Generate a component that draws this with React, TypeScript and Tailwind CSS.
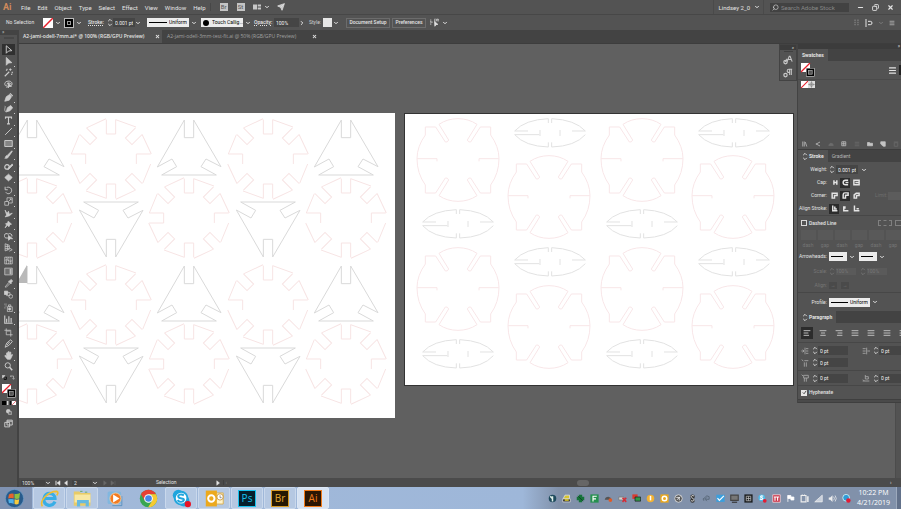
import React from "react";
import { ChevronDown, ChevronRight, Menu, Search, Send, Minus, X, Copy, AlignLeft, AlignCenter, AlignRight, AlignJustify } from "lucide-react";

type Kids = { children?: React.ReactNode };

/* ---------- shared bits ---------- */

function Glyph({ children, size = "size-[9px]" }: Kids & { size?: string }) {
  return (
    <svg viewBox="0 0 24 24" className={`${size} shrink-0`} fill="none" stroke="currentColor" strokeWidth="2" aria-hidden="true">
      {children}
    </svg>
  );
}

function Chev() {
  return <ChevronDown className="size-[6px] shrink-0" strokeWidth={4} aria-hidden="true" />;
}

function Stepper() {
  return (
    <svg viewBox="0 0 6 10" className="h-[9px] w-[6px] shrink-0" fill="none" stroke="currentColor" aria-hidden="true">
      <path d="M1 3.5 3 1.5l2 2M1 6.5l2 2 2-2" />
    </svg>
  );
}

function NoneSwatch({ className }: { className: string }) {
  return (
    <svg viewBox="0 0 10 10" className={className} aria-hidden="true">
      <rect width="10" height="10" fill="#fff" />
      <path d="M0 10 10 0" stroke="#e8202c" strokeWidth="1.5" />
    </svg>
  );
}

function Field({ label, value, className = "w-[22px]" }: { label: string; value: string; className?: string }) {
  return <input aria-label={label} defaultValue={value} className={`${className} h-[9px] shrink-0 bg-[#454545] px-[2px] text-[#f2f2f2] outline-none`} />;
}

function LineSelect({ label, text, className }: { label: string; text?: string; className: string }) {
  return (
    <span className="flex shrink-0 items-center gap-[2px]">
      <span className={`${className} flex h-[9px] items-center gap-[2px] bg-[#ececec] px-[2px] text-black`}>
        <span className="h-px min-w-[6px] flex-1 bg-black" />
        <select aria-label={label} className={`${text ? "w-[18px]" : "w-0"} appearance-none bg-transparent outline-none`}>
          <option>{text ?? ""}</option>
        </select>
      </span>
      <Chev />
    </span>
  );
}

function FillStroke() {
  return (
    <svg viewBox="0 0 14 14" className="size-[14px] shrink-0" aria-hidden="true">
      <rect x="0" y="0" width="9" height="9" fill="#fff" />
      <path d="M0 9 9 0" stroke="#e8202c" strokeWidth="1.3" />
      <rect x="5" y="5" width="8.5" height="8.5" fill="#ddd" />
      <rect x="5.5" y="5.5" width="7.5" height="7.5" fill="#000" />
      <rect x="7.3" y="7.3" width="3.9" height="3.9" fill="#535353" stroke="#bbb" strokeWidth=".6" />
    </svg>
  );
}

/* ---------- top bars ---------- */

const menus = ["File", "Edit", "Object", "Type", "Select", "Effect", "View", "Window", "Help"];

function MenuBar() {
  return (
    <header className="flex h-[15px] shrink-0 items-center border-b border-[#474747] text-[6px]">
      <span className="w-[18px] pl-[3px] text-[9px] font-bold leading-none text-[#d08a5c]">Ai</span>
      <nav className="flex items-center gap-[7px] pl-[3px]">
        {menus.map((m) => (
          <button key={m}>{m}</button>
        ))}
      </nav>
      <div className="ml-[4px] flex items-center gap-[9px] border-l border-[#474747] pl-[9px]">
        {["Br", "St"].map((t) => (
          <button key={t} className="flex size-[8px] items-center justify-center bg-[#c4c4c4] text-[6px] leading-none text-[#535353]">{t}</button>
        ))}
        <button aria-label="Arrange documents" className="-ml-px flex items-center gap-[3px]">
          <svg viewBox="0 0 8 5" className="h-[6px] w-[8px]" fill="#c8c8c8"><path d="M0 0h4v5H0zM4.700 0H8v2.100H4.700zM4.700 2.900H8V5H4.700z" /></svg>
          <Chev />
        </button>
        <button aria-label="GPU performance" className="-ml-[2px]"><Send className="size-[8px] fill-[#c8c8c8]" /></button>
      </div>
      <div className="ml-auto flex h-full items-center">
        <button className="flex h-full items-center gap-[4px] border-x border-[#4a4a4a] pl-[5px] pr-[3px]">Lindsey 2_0 <Chev /></button>
        <label className="ml-[6px] flex h-[9px] w-[79px] items-center gap-[2px] bg-[#424242] px-[2px]">
          <Search className="size-[7px] -scale-x-100" aria-hidden="true" />
          <input aria-label="Search Adobe Stock" placeholder="Search Adobe Stock" className="w-[66px] bg-transparent outline-none placeholder:text-[#888888]" />
        </label>
        <div className="flex items-center gap-[8px] pl-[8px] pr-[7px]">
          <button aria-label="Minimize"><Minus className="size-[7px]" strokeWidth={4} /></button>
          <button aria-label="Restore"><Copy className="size-[7px] -scale-x-100" strokeWidth={3} /></button>
          <button aria-label="Close"><X className="size-[7px]" strokeWidth={4} /></button>
        </div>
      </div>
    </header>
  );
}

function ControlBar() {
  return (
    <div className="flex h-[15px] shrink-0 items-center whitespace-nowrap">
      <span className="w-[43px] pl-[6px]">No Selection</span>
      <button aria-label="Fill" className="flex w-[21px] items-center gap-[2px]"><NoneSwatch className="size-[10px]" /><Chev /></button>
      <button aria-label="Stroke color" className="flex w-[24px] items-center gap-[2px]">
        <span className="flex size-[10px] items-center justify-center border border-[#bbbbbb] bg-black"><span className="size-[4px] border border-[#999999]" /></span>
        <Chev />
      </button>
      <span className="w-[19px] font-medium underline decoration-dotted">Stroke:</span>
      <Stepper />
      <Field label="Stroke weight" value="0.001 pt" />
      <Chev />
      <span className="w-[6px]" />
      <LineSelect label="Width profile" text="Uniform" className="w-[42px]" />
      <label className="ml-[4px] flex h-[9px] w-[42px] items-center gap-[3px] bg-[#ececec] pl-[2px] text-black">
        <span className="size-[6px] shrink-0 rounded-full bg-black" />
        <select aria-label="Brush" className="w-[31px] appearance-none bg-transparent outline-none"><option>Touch Callig...</option></select>
      </label>
      <span className="w-[2px]" />
      <Chev />
      <span className="ml-[3px] w-[20px] font-medium underline decoration-dotted">Opacity:</span>
      <Field label="Opacity" value="100%" className="w-[25px]" />
      <ChevronRight className="size-[6px]" strokeWidth={4} aria-hidden="true" />
      <span className="ml-[4px] w-[14px] text-[#d0d0d0]">Style:</span>
      <button aria-label="Graphic style" className="flex w-[23px] items-center gap-[1px]"><span className="size-[9px] bg-[#e6e6e6]" /><Chev /></button>
      <button className="h-[10px] w-[44px] border border-[#6c6c6c] font-medium leading-none">Document Setup</button>
      <button className="ml-[2px] h-[10px] w-[34px] border border-[#6c6c6c] font-medium leading-none">Preferences</button>
      <button aria-label="Select similar" className="ml-[4px] flex items-center gap-[3px]">
        <Glyph><path d="M2 4v14M2 11h6M12 3h5v5h-5zM19 3h4v5h-4z" strokeDasharray="3 1" /><path d="m12 9 9 8-5 .5L13 22z" fill="currentColor" /></Glyph>
        <Chev />
      </button>
      <div className="ml-auto flex items-center gap-[5px] pr-[6px]">
        <span className="text-[#7b7b7b]"><Glyph size="size-[7px]"><path d="M7 2v20M17 2v20" strokeWidth="5" strokeDasharray="5 2" /></Glyph></span>
        <Glyph size="size-[8px]"><path d="M3 1v22" strokeWidth="4" strokeDasharray="4 2" /><path d="M9 7h7a5 5 0 0 1 0 10H9" strokeWidth="3" /></Glyph>
        <span className="text-[#7b7b7b]"><Chev /></span>
        <Menu className="size-[6px] text-[#bbbbbb]" strokeWidth={3} aria-hidden="true" />
      </div>
    </div>
  );
}

/* ---------- tools ---------- */

const solid = { fill: "currentColor" };
const tools: { name: string; art: React.ReactNode }[][] = [
  [
    { name: "Selection", art: <path d="m6 2 15 13-9 1-6 6z" strokeWidth="2.500" /> },
    { name: "Direct Selection", art: <path d="m6 1 15 14-9 1-6 6z" {...solid} /> },
    { name: "Magic Wand", art: <path d="M2 22 14 10M17 1v6M14 4h6M22 10v4M8 2v4M5 6h3M19 17h3" strokeWidth="3" /> },
    { name: "Lasso", art: <><path d="M5 16C0 12 1 4 11 3s14 8 7 13M5 16c3-2 5 1 2 5M7 11c4-4 9-4 13 0" strokeWidth="2.500" /><path d="m11 7 9 10-5 0-4 4z" {...solid} /></> },
  ],
  [
    { name: "Pen", art: <><path d="M2 22 6 10l9-6 5 6-6 9z" {...solid} /><path d="m16 1 7 7" strokeWidth="3" /></> },
    { name: "Curvature", art: <><path d="m6 21 3-11 9-6 5 6-7 8z" {...solid} /><path d="M2 5c4 3-4 9 3 17" /></> },
    { name: "Type", art: <path d="M4 7V3h16v4M12 3v18M8 21h8" strokeWidth="3" /> },
    { name: "Line Segment", art: <path d="M3 21 21 3" strokeWidth="2.500" /> },
    { name: "Rectangle", art: <path d="M2 4h20v16H2z" fill="#858585" strokeWidth="2.500" /> },
    { name: "Paintbrush", art: <path d="M2 22c3-1 1-7 6-7L21 2l1 2L12 18c-2 5-6 4-10 4z" {...solid} /> },
    { name: "Shaper", art: <><circle cx="8" cy="13" r="6" strokeWidth="3" /><path d="m10 20 3-6L22 5l2 3-9 9z" {...solid} /></> },
    { name: "Eraser", art: <path d="m2 12 10-9 10 9-10 9zM7 8l10 9" {...solid} /> },
  ],
  [
    { name: "Rotate", art: <path d="M7 4c8-3 15 3 13 10s-11 9-15 3M3 2v8h7" strokeWidth="2.500" /> },
    { name: "Scale", art: <path d="M2 12h10v10H2zM8 12V2h14v14H12M13 11l6-6M15 5h4v4" /> },
    { name: "Width", art: <path d="m3 3 5 9 4-6 2 8 8-3-7 7-12 3 4-5z" {...solid} /> },
    { name: "Puppet Warp", art: <path d="m11 3 9 8-4 1-3 6-4-4-6 7 4-8-3-3 6-2z" {...solid} /> },
    { name: "Shape Builder", art: <><path d="M13 16H8a6 6 0 1 1 3-10 6 6 0 0 1 10 6" strokeWidth="2.500" /><path d="m12 9 11 9-6 0-5 4z" {...solid} /></> },
    { name: "Perspective Grid", art: <path d="M3 2v19M3 2l11 4v11L3 21M3 9l11 0M3 15h11M9 4v15M14 13l8 5-8 4" /> },
  ],
  [
    { name: "Mesh", art: <><path d="M2 3h20v18H2z" /><path d="M2 12c7-6 13 6 20 0M12 3c-5 7 5 11 0 18M7 3c3 6-3 12 0 18M17 3c-3 6 3 12 0 18" /></> },
    { name: "Gradient", art: <><path d="M2 3h20v18H2z" fill="#707070" /><path d="M15 5h5v14h-5z" fill="#bbb" stroke="none" /></> },
    { name: "Eyedropper", art: <><path d="M3 21 13 9l3 3L6 22z" /><path d="m12 6 3-1 4-4 4 4-4 5v3z" {...solid} /></> },
    { name: "Blend", art: <><path d="M1 3h9v9H1z" {...solid} /><path d="M7 7h9v8H7z" /><circle cx="18" cy="17" r="5" /></> },
  ],
  [
    { name: "Symbol Sprayer", art: <><path d="M9 10h13v13H9zM12 5h6v4h-6z" /><circle cx="15" cy="16" r="3" {...solid} /><path d="M1 3h7M2 8h5M1 13h4" strokeDasharray="2 1" /></> },
    { name: "Column Graph", art: <path d="M2 1v21h21M7 10v10M13 3v17M19 8v12" strokeWidth="3" /> },
  ],
  [
    { name: "Artboard", art: <path d="M6 1v17h17M1 6h17v17M8 8h8" /> },
    { name: "Slice", art: <path d="m3 22 4-11L18 2l4 5-9 10z M8 16l7-8" strokeWidth="2.500" /> },
    { name: "Hand", art: <path d="M7 14V5q2-2 3 0l1 5V2q2-1 3 0v8l2-7q2-1 2 1v8l3-3q3 0 1 3l-5 10H9L2 13q1-3 4 0z" {...solid} /> },
    { name: "Zoom", art: <><circle cx="10" cy="9" r="7" strokeWidth="2.500" /><path d="m15 14 7 8" strokeWidth="4" /></> },
  ],
];

const groupHeights = ["h-[46px]", "h-[91px]", "h-[68px]", "h-[45px]", "h-[23px]", "h-[45px]"];

function ToolBox() {
  return (
    <aside className="flex w-[19px] shrink-0 flex-col items-center border-r-2 border-[#434343] text-[#cccccc]">
      <span className="h-[5px] w-full bg-[#434343] pl-[2px] text-[5px] leading-[4px]">»</span>
      <span className="mt-[2px] h-[2px] w-[10px] bg-[#474747]" />
      <div className="mt-[5px] flex flex-col gap-[2px]">
        {tools.map((group, g) => (
          <div key={g} className={`flex flex-col justify-between ${groupHeights[g]}`}>
            {group.map((t) => (
              <button
                key={t.name}
                aria-label={t.name}
                className={`relative flex h-[11px] w-[13px] items-center justify-center ${t.name === "Selection" ? "bg-[#303030]" : ""}`}
              >
                <Glyph>{t.art}</Glyph>
                {!["Selection", "Magic Wand", "Lasso", "Mesh", "Gradient", "Blend", "Artboard", "Zoom"].includes(t.name) && (
                  <span className="absolute bottom-0 right-0 size-px bg-[#cccccc]" />
                )}
              </button>
            ))}
          </div>
        ))}
      </div>
      <div className="mt-[3px] flex w-full items-center justify-between px-[2px]">
        <Glyph size="size-[5px]"><path d="M1 1h13v13H1z" {...solid} /><path d="M10 10h11v11H10z" stroke="#000" strokeWidth="4" /></Glyph>
        <Glyph size="size-[5px]"><path d="M3 5h14v14M6 1 2 5l4 5M12 16l5 5 5-5" strokeWidth="3" /></Glyph>
      </div>
      <div className="mt-[4px]"><FillStroke /></div>
      <div className="mt-[3px] flex">
        <span className="size-[4px] border border-black bg-black" />
        <span className="ml-px size-[4px] bg-linear-to-r from-white to-black" />
        <NoneSwatch className="ml-px size-[4px]" />
      </div>
      <button aria-label="Drawing mode" className="mt-[4px]"><Glyph size="size-[6px]"><circle cx="9" cy="9" r="8" {...solid} /><path d="M10 10h12v12H10z" fill="#777" /></Glyph></button>
      <button aria-label="Screen mode" className="mt-[4px]"><Glyph><path d="M8 3h14v13H8zM2 9h13v12H2zM8 6h14" strokeWidth="2.500" /></Glyph></button>
    </aside>
  );
}

/* ---------- artwork ---------- */

function Gear({ x, y, closed = false }: { x: number; y: number; closed?: boolean }) {
  const wedge = "M14 -118 L75 -96 M14 -118 V-75 H-14 V-118";
  return (
    <g transform={`translate(${x} ${y}) scale(.3333)`} stroke="#f7e4e4" strokeWidth="3" fill="none">
      {[0, 1, 3, 4, 5, 7].map((k) => (
        <path key={k} d={wedge} transform={`rotate(${k * 45})`} />
      ))}
      <path d="M119 -15H76V15M119 15 95 73M-119 -15H-76V15M-119 -15-95 -73" />
      {closed && <path d="M-76 15h-43" />}
    </g>
  );
}

function Triangle({ x, y, flip = false }: { x: number; y: number; flip?: boolean }) {
  return (
    <g transform={`translate(${x} ${y}) scale(.3333 ${flip ? "-.3333" : ".3333"})`} stroke="#d9d9d9" strokeWidth="3" fill="none">
      <path d="M14 0 96 140 51 117 36 140 82 165H-82L-37 140-51 117-95 141-14 0V53H14Z" />
    </g>
  );
}

function Rosette({ x, y }: { x: number; y: number }) {
  const half = "M0-124Q-32-124-57-107L-28-60Q-31-52-38-54L-67-99H-98V-75Q-123-40-123-4H-63V4";
  return (
    <g transform={`translate(${x} ${y}) scale(.3333)`} stroke="#f8e6e8" strokeWidth="3" fill="none">
      <path d={half} />
      <path d={half} transform="scale(-1 1)" />
      <path d="M0 124Q-32 124-57 107L-28 60Q-31 52-38 54L-67 99H-98V75Q-123 40-123-4" />
      <path d="M0 124Q32 124 57 107L28 60Q31 52 38 54L67 99H98V75Q123 40 123-4" />
    </g>
  );
}

function Leaf({ x, y }: { x: number; y: number }) {
  const side = "M-5-30V-43Q-75-40-106-6H-66M-30-9V9M-106 5Q-75 40-5 42V28";
  return (
    <g transform={`translate(${x} ${y}) scale(.3333)`} stroke="#e2e2e2" strokeWidth="3" fill="none">
      <path d={side} />
      <path d={side} transform="scale(-1 1)" />
      <path d="M-106 5H-32" />
    </g>
  );
}

const rows = [0, 146];
const rosettes = [[458, 160], [642, 160], [549, 197], [733, 197], [458, 289], [642, 289], [549, 327], [733, 327]];
const leaves = [[550, 133], [734, 133], [458, 224], [642, 224], [550, 262], [734, 262], [458, 354], [642, 354]];

function Canvas() {
  return (
    <main className="flex min-w-0 flex-1 items-start gap-[9px] overflow-hidden bg-[#606060] pt-[69px]">
      <svg viewBox="19 113 376 305" className="h-[305px] w-[376px] shrink-0 bg-white" role="img" aria-label="Artboard 1">
        {rows.map((dy) => (
          <g key={dy} transform={`translate(0 ${dy})`}>
            <Gear x={111} y={159} />
            <Gear x={268} y={159} />
            <Gear x={32} y={218} />
            <Gear x={189} y={218} closed />
            <Gear x={346} y={218} />
            <Triangle x={32} y={120} />
            <Triangle x={189} y={120} />
            <Triangle x={346} y={120} />
            <Triangle x={111} y={257} flip />
            <Triangle x={268} y={257} flip />
          </g>
        ))}
        <path d="M19 283v-4l8-14v18z" fill="#b9b9b9" />
      </svg>
      <svg viewBox="405 114 388 271" className="box-content h-[271px] w-[388px] shrink-0 border border-[#333333] bg-white" role="img" aria-label="Artboard 2">
        {rosettes.map(([x, y]) => <Rosette key={`${x}-${y}`} x={x} y={y} />)}
        {leaves.map(([x, y]) => <Leaf key={`${x}-${y}`} x={x} y={y} />)}
      </svg>
    </main>
  );
}

/* ---------- panels ---------- */

function PanelTabs({ tabs }: { tabs: string[] }) {
  return (
    <div role="tablist" className="flex h-[12px] bg-[#434343]">
      {tabs.map((t, i) => (
        <button key={t} role="tab" aria-selected={i === 0} className={`flex items-center gap-px px-[4px] ${i === 0 ? "bg-[#535353] font-bold" : "text-[#b5b5b5]"}`}>
          {i === 0 && t !== "Swatches" && <Stepper />}
          {t}
        </button>
      ))}
    </div>
  );
}

function Row({ label, children, dim = false, h = "h-[13px]" }: Kids & { label: string; dim?: boolean; h?: string }) {
  return (
    <div className={`flex ${h} items-center ${dim ? "text-[#777777]" : ""}`}>
      <span className="w-[29px] shrink-0 whitespace-nowrap text-right">{label}</span>
      <div className="flex items-center gap-[1px] pl-[2px]">{children}</div>
    </div>
  );
}

function Trio({ names, on, art }: { names: string[]; on: number; art: string[] }) {
  return (
    <>
      {names.map((n, i) => (
        <button key={n} aria-label={n} className={`flex size-[10px] items-center justify-center ${i === on ? "bg-[#2c2c2c]" : ""}`}>
          <Glyph size="size-[7px]"><path d={art[i]} strokeWidth="5" /></Glyph>
        </button>
      ))}
    </>
  );
}

function Indent({ label, art }: { label: string; art: string }) {
  return (
    <span className="flex w-[61px] shrink-0 items-center pl-[3px]">
      <span className="text-[#aaaaaa]"><Glyph size="size-[8px]"><path d={art} strokeWidth="2.500" /></Glyph></span>
      <span className="w-[3px]" />
      <Stepper />
      <Field label={label} value="0 pt" className="w-[30px]" />
    </span>
  );
}

const alignIcons = [AlignLeft, AlignCenter, AlignRight, AlignJustify, AlignJustify, AlignJustify, AlignJustify];

function Dock() {
  return (
    <aside className="flex w-[104px] shrink-0 flex-col overflow-hidden">
      <div className="border-l border-[#434343] bg-[#535353]">
        <div className="h-[5px] bg-[#3c3c3c] pr-px text-right leading-[4px]">»</div>
        <PanelTabs tabs={["Swatches"]} />
        <div className="flex h-[19px] items-center justify-between border-b border-[#4a4a4a] pl-[3px]">
          <FillStroke />
          <span className="flex items-center gap-[2px]"><Menu className="size-[9px]" strokeWidth={3} aria-hidden="true" /><span className="h-[10px] w-[2px] bg-[#222222]" /></span>
        </div>
        <div className="flex h-[58px] items-start pl-[3px] pt-px">
          <NoneSwatch className="size-[7px]" />
          <Glyph size="size-[7px]"><path d="M0 0h24v24H0z" fill="#ddd" stroke="none" /><path d="M12 1v22M1 12h22" stroke="#777" /><circle cx="12" cy="12" r="6" stroke="#777" /></Glyph>
        </div>
        <div className="flex h-[11px] items-center gap-[7px] pl-[4px] text-[#c4c4c4]">
          {[
            ["Libraries", "M3 2v20M9 2v20M13 4l6 18"],
            ["Share", "M20 4 5 12l15 8M3 12h4"],
            ["Cloud", "M3 18q0-6 5-6 2-6 7-2 6 0 6 8z"],
            ["Show kinds", "M3 3h16v16H3zM3 11h16M11 3v16"],
            ["Options", "M3 5h18M3 12h18M3 19h18"],
            ["New group", "M2 6h8l2 3h10v10H2z"],
            ["New swatch", "M3 3h18v18h-8l-10-9z"],
            ["Delete", "M5 7h14v14H5zM3 4h18"],
          ].map(([n, d], i) => (
            <button key={n} aria-label={n} className={[2, 4, 7].includes(i) ? "text-[#6c6c6c]" : ""}>
              <Glyph size="size-[6px]"><path d={d} strokeWidth="3" fill={i === 5 || i === 6 || i === 2 ? "currentColor" : "none"} /></Glyph>
            </button>
          ))}
        </div>
        <div className="border-t border-[#3c3c3c]"><PanelTabs tabs={["Stroke", "Gradient"]} /></div>
        <div className="pt-px">
          <Row label="Weight:"><Stepper /><Field label="Weight" value="0.001 pt" /><span className="w-px" /><Chev /></Row>
          <Row label="Cap:"><Trio names={["Butt cap", "Round cap", "Projecting cap"]} on={1} art={["M10 4v16M20 4v16M10 12h12", "M21 4h-9a8 8 0 0 0 0 16h9M12 12h10", "M3 4h18v16H3zM8 12h13"]} /></Row>
          <Row label="Corner:">
            <Trio names={["Miter", "Round", "Bevel"]} on={1} art={["M4 21V4h17v8H12v9z", "M4 21V9q0-6 6-6h11v8H12v10z", "M4 21V10l7-6h10v8H12v9z"]} />
            <span className="w-[12px]" /><span className="text-[#6e6e6e]">Limit:</span><span className="h-[8px] w-[14px] bg-[#5c5c5c]" />
          </Row>
          <Row label="Align Stroke:"><Trio names={["Center", "Inside", "Outside"]} on={0} art={["M6 2v18h16M13 5v9h7", "M6 4v16h16M10 4v9", "M5 2v18h17M12 13h8"]} /></Row>
        </div>
        <div className="flex h-[15px] items-center justify-between border-t border-[#474747] pl-[3px]">
          <label className="flex items-center gap-[2px] font-medium">
            <input type="checkbox" className="size-[6px] appearance-none border border-[#d8d8d8]" />Dashed Line
          </label>
          <span className="flex gap-[3px]"><span className="h-[6px] w-[14px] border border-dashed border-[#808080]" /><span className="h-[6px] w-[6px] border border-r-0 border-dashed border-[#808080]" /></span>
        </div>
        <div className="flex h-[19px] items-start gap-[1px] pl-[2px] text-[#757575]">
          {["dash", "gap", "dash", "gap", "dash", "gap"].map((t, i) => (
            <label key={i} className="flex w-[16px] shrink-0 flex-col items-center gap-[2px]">
              <input disabled aria-label={`${t} ${i + 1}`} className="h-[10px] w-[15px] bg-[#595959]" />{t}
            </label>
          ))}
        </div>
        <Row label="Arrowheads:" h="h-[15px]"><LineSelect label="Start arrowhead" className="w-[18px]" /><span className="w-[2px]" /><LineSelect label="End arrowhead" className="w-[18px]" /></Row>
        <Row label="Scale:" dim h="h-[14px]"><Stepper /><span className="w-[20px] bg-[#5a5a5a]">100%</span><span className="w-[2px]" /><Stepper /><span className="w-[20px] bg-[#5a5a5a]">100%</span></Row>
        <Row label="Align:" dim h="h-[14px]"><span className="w-[8px] bg-[#4a4a4a] text-center">→</span><span className="w-[2px]" /><span className="w-[8px] bg-[#4a4a4a] text-center">→</span></Row>
        <div className="border-t border-[#474747]"><Row label="Profile:" h="h-[18px]"><LineSelect label="Profile" text="Uniform" className="w-[41px]" /></Row></div>
        <PanelTabs tabs={["Paragraph"]} />
        <div className="flex h-[19px] items-center gap-[4px] pl-[3px]">
          {alignIcons.map((Icon, i) => (
            <button key={i} aria-label={`Paragraph alignment ${i + 1}`} className={`flex size-[12px] shrink-0 items-center justify-center ${i === 0 ? "bg-[#2c2c2c]" : ""}`}>
              <Icon className="size-[8px] text-[#bbbbbb]" strokeWidth={3} />
            </button>
          ))}
        </div>
        <div className="flex flex-col gap-[3px] border-t border-[#474747] py-[3px]">
          <div className="flex"><Indent label="Left indent" art="M1 12h8M5 8l4 4-4 4M12 2v20M15 5h7M15 12h7M15 19h7" /><Indent label="Right indent" art="M2 5h9M2 12h9M2 19h9M14 2v20M24 12h-8" /></div>
          <div className="flex"><Indent label="First-line indent" art="M2 2l5 4M10 5h12M10 10v13M16 10v13" /></div>
        </div>
        <div className="flex h-[15px] items-center border-t border-[#474747]"><Indent label="Space before" art="M2 2l4 4M8 4h14v8H8zM10 12v11M16 12v11" /><Indent label="Space after" art="M2 21h20M10 3v12h9V8h-9M3 17l4 4" /></div>
        <div className="flex h-[14px] items-center border-t border-[#474747] pl-[3px]">
          <label className="flex items-center gap-[2px] font-medium">
            <span className="grid place-items-center">
              <input type="checkbox" defaultChecked className="col-start-1 row-start-1 size-[6px] appearance-none bg-[#e6e6e6]" />
              <svg viewBox="0 0 6 6" className="pointer-events-none col-start-1 row-start-1 size-[5px]" fill="none" stroke="#333"><path d="m1 3 1.500 1.500L5 1" /></svg>
            </span>
            Hyphenate
          </label>
        </div>
        <div className="h-[4px] border-y border-[#3f3f3f] bg-[#4a4a4a]" />
      </div>
      <div className="flex flex-1 bg-[#606060]"><span className="ml-auto w-[6px] border-l border-[#4c4c4c] bg-[#535353]" /></div>
    </aside>
  );
}

function IconStrip() {
  return (
    <div className="absolute right-[104px] top-0 flex h-[37px] w-[18px] flex-col items-center border border-[#434343] bg-[#535353] text-[#c8c8c8]">
      <span className="h-[5px] w-full bg-[#3c3c3c] pr-[2px] text-right leading-[4px]">«</span>
      <span className="mt-[1px] h-px w-[9px] bg-[#404040]" />
      <button aria-label="Character styles" className="mt-[3px]"><Glyph size="size-[10px]"><circle cx="6" cy="17" r="4" strokeWidth="3" /><path d="m10 16 5-13h2l5 13M12 11h9M5 17l5-8" strokeWidth="2.500" /></Glyph></button>
      <button aria-label="Paragraph styles" className="mt-[3px]"><Glyph size="size-[10px]"><circle cx="6" cy="17" r="4" strokeWidth="3" /><path d="M20 3v14M16 3v14M22 3h-8q-4 0-4 4t6 4" strokeWidth="2.500" /></Glyph></button>
    </div>
  );
}

/* ---------- status and taskbar ---------- */

function StatusBar() {
  return (
    <footer className="flex h-[9px] shrink-0 items-center bg-[#4b4b4b] leading-none">
      <input aria-label="Zoom level" defaultValue="100%" className="ml-[2px] w-[24px] bg-[#434343] px-px outline-none" />
      <Chev />
      <button aria-label="First artboard" className="ml-[4px]"><Glyph size="size-[6px]"><path d="M4 3v18" strokeWidth="4" /><path d="M20 3v18L8 12z" {...solid} /></Glyph></button>
      <button aria-label="Previous artboard" className="ml-[2px]"><Glyph size="size-[6px]"><path d="M17 3v18L6 12z" {...solid} /></Glyph></button>
      <input aria-label="Artboard" defaultValue="2" className="ml-[3px] w-[20px] bg-[#434343] px-[2px] outline-none" />
      <Chev />
      <span className="ml-[4px] flex gap-[2px] text-[#686868]">
        <Glyph size="size-[6px]"><path d="M7 3v18l11-9z" {...solid} /></Glyph>
        <Glyph size="size-[6px]"><path d="M4 3v18l12-9zM20 3v18" {...solid} /></Glyph>
      </span>
      <span className="ml-[40px]">Selection</span>
      <span className="ml-[38px]"><Glyph size="size-[6px]"><path d="M7 3v18l11-9z" {...solid} /></Glyph></span>
      <span className="ml-[2px] border-l border-[#404040] px-[2px] text-[#888888]">‹</span>
      <span className="flex flex-1 justify-center"><span className="ml-[46px] h-[6px] w-[12px] rounded-full bg-[#666666]" /></span>
      <span className="w-[11px]">›</span>
    </footer>
  );
}

function AdobeTile({ text, frame }: { text: string; frame: string }) {
  return <span className={`${frame} flex h-[17px] w-[18px] items-center justify-center border text-[10px] font-medium leading-none`}>{text}</span>;
}

const big = "size-[19px]";
const apps: { name: string; on: boolean; art: React.ReactNode }[] = [
  { name: "Internet Explorer", on: true, art: <svg viewBox="0 0 24 24" className={big} fill="none"><path d="M19 16c-4 8-15 5-14-4S19 4 19 12H6" stroke="#38aee6" strokeWidth="4" /><path d="M3 22C-1 15 10 3 21 3c3 1 1 4 0 5" stroke="#edbd32" strokeWidth="2" /></svg> },
  { name: "Explorer", on: true, art: <svg viewBox="0 0 24 24" className={big}><path d="M1 3h7l2 2h12v16H1z" fill="#e8cb68" /><path d="M2 7h20v10H2z" fill="#f8e8a4" /><path d="M5 14h15v8h-4v-4H9v4H5z" fill="#66b9df" /><path d="M9 3h3M15 4h3" stroke="#5aa34d" /></svg> },
  { name: "Media Player", on: false, art: <svg viewBox="0 0 24 24" className={big}><rect x="2" y="3" width="17" height="16" rx="2" fill="#81b7df" /><path d="M8 21h12V9" fill="none" stroke="#4c8dbd" /><circle cx="12" cy="12" r="7" fill="#f37b20" stroke="#f9d5a8" /><path d="M9 7v10l8-5z" fill="#fff" /></svg> },
  { name: "Chrome", on: false, art: <svg viewBox="0 0 24 24" className={big}><circle cx="12" cy="12" r="11" fill="#39a651" /><path d="M2.500 6.500A11 11 0 0 1 21.500 6.500H12L7.300 14.700z" fill="#e64033" /><path d="M21.500 6.500A11 11 0 0 1 11.500 23L16.700 14.700 12 6.500z" fill="#f5ca32" /><circle cx="12" cy="12" r="5.500" fill="#fff" /><circle cx="12" cy="12" r="4.200" fill="#4587e9" /></svg> },
  { name: "Skype", on: true, art: <svg viewBox="0 0 24 24" className={big}><circle cx="8" cy="8" r="7" fill="#20a5dd" /><circle cx="15" cy="15" r="7" fill="#20a5dd" /><circle cx="11.500" cy="11.500" r="8" fill="#fff" stroke="#20a5dd" strokeWidth="2.500" /><path d="M15 8c-3-2-8-1-7 2s8 1 7 4-6 3-8 0" fill="none" stroke="#20a5dd" strokeWidth="2.500" /><circle cx="20" cy="19" r="4" fill="#e81224" /></svg> },
  { name: "Outlook", on: true, art: <svg viewBox="0 0 24 24" className={big}><path d="M9 5h14v14H9z" fill="#fff3cb" stroke="#d9a83a" /><path d="M1 2h14v20H1z" fill="#eca91d" /><circle cx="8" cy="12" r="4" fill="none" stroke="#fff" strokeWidth="2.500" /><circle cx="19" cy="10" r="4" fill="#fff" stroke="#c18b29" /><path d="M19 8v3h2" fill="none" stroke="#777" /></svg> },
  { name: "Photoshop", on: true, art: <AdobeTile text="Ps" frame="border-[#18c2ee] bg-[#06202d] text-[#18c2ee]" /> },
  { name: "Bridge", on: true, art: <AdobeTile text="Br" frame="border-[#d69a24] bg-[#241803] text-[#e3a82f]" /> },
  { name: "Illustrator", on: true, art: <AdobeTile text="Ai" frame="border-[#ef7a1a] bg-[#2b1604] text-[#ef7a1a]" /> },
];

const tray: { name: string; art: React.ReactNode }[] = [
  { name: "Network globe", art: <><circle cx="12" cy="12" r="10" fill="#1e4a5d" stroke="none" /><path d="M12 6v14M6 6l6 7" stroke="#dff0e8" strokeWidth="4" /></> },
  { name: "Taxi", art: <><path d="M3 13 8 3h12v10z" fill="#d7c52f" /><path d="M2 13h20v8H2z" fill="#1b1b1b" /><path d="M7 16h11" stroke="#f1dd32" strokeWidth="4" /></> },
  { name: "Antivirus", art: <><path d="M12 2v20M2 12h20" stroke="#16733a" strokeWidth="9" /><path d="m5 5 14 14" stroke="#0c3c20" /></> },
  { name: "F tool", art: <><path d="M1 1h22v22H1z" fill="#26914f" stroke="none" /><path d="M8 20V6h10M8 13h8" stroke="#fff" strokeWidth="3" /></> },
  { name: "Creative Cloud", art: <><path d="M2 15q1-8 10-8 7 1 8 8z" fill="#555" stroke="none" /><circle cx="17" cy="16" r="5" fill="#e05a28" stroke="none" /></> },
  { name: "Drive disconnected", art: <><path d="M2 8h14v8H2z" fill="#d5d5d5" stroke="#777" /><path d="m12 10 10 11m0-11L12 21" stroke="#d72b35" strokeWidth="4" /></> },
  { name: "Display", art: <><path d="M1 1h14v12H1z" fill="#d93b2f" stroke="none" /><path d="M8 8h15v11H8z" fill="#2f9a49" stroke="#222" /></> },
  { name: "Shield", art: <><circle cx="12" cy="12" r="10" fill="#f2b233" stroke="none" /><path d="M12 5v12" stroke="#fff" strokeWidth="4" /></> },
  { name: "Outlook tray", art: <><path d="M1 1h22v22H1z" fill="#eca91d" stroke="none" /><circle cx="12" cy="12" r="6" stroke="#fff" strokeWidth="4" /></> },
  { name: "Sync", art: <><circle cx="12" cy="12" r="10" fill="#555" stroke="#eee" /><path d="M7 16 17 7M6 9h8v8" stroke="#fff" /></> },
  { name: "Scanner", art: <><circle cx="12" cy="7" r="6" fill="#333" stroke="none" /><circle cx="12" cy="17" r="6" fill="#333" stroke="none" /><path d="M16 6c-3-4-10-1-6 3l5 5c4 4-4 7-7 3" stroke="#eee" strokeWidth="2.500" /></> },
  { name: "Cloud sync", art: <path d="M5 18q-6-6 3-8 3-9 11-3v7H9m4-5-5 5 5 5" stroke="#596879" strokeWidth="2.500" /> },
  { name: "Task check", art: <><path d="M1 2h22v19H1z" fill="#3b9fdd" stroke="none" /><path d="m4 11 5 6L21 5" stroke="#fff" strokeWidth="3" /></> },
  { name: "Monitor", art: <><path d="M2 3h20v14H2z" fill="#777" stroke="#444" strokeWidth="3" /><path d="M5 22h14" stroke="#333" strokeWidth="3" /></> },
  { name: "Graphics", art: <><path d="M1 1h22v22H1z" fill="#1e2022" stroke="none" /><path d="M6 6h12v12H6zM6 12h12M12 6v12" stroke="#bbb" /></> },
  { name: "Skype tray", art: <><circle cx="10" cy="10" r="9" fill="#4dbbe8" stroke="none" /><path d="M14 6c-8-3-9 3-4 4s3 7-5 3" stroke="#fff" strokeWidth="3" /><circle cx="18" cy="18" r="5" fill="#e31c35" stroke="none" /></> },
  { name: "Trend", art: <><path d="M2 2h20v20H2z" fill="#c9344a" stroke="#f3dce0" /><path d="M8 7v11M15 7v11M5 8h14" stroke="#fff" strokeWidth="3" /></> },
  { name: "Action Center", art: <path d="M5 3v18M5 4h8v4h8v8h-8v-4H5z" fill="#fff" stroke="#fff" /> },
  { name: "Power", art: <><path d="M3 4h13v17H3zM6 1v3m6-3v3" stroke="#eee" strokeWidth="3" /><path d="M19 6h4v15h-4z" fill="#eee" stroke="none" /></> },
  { name: "Wireless", art: <path d="M22 3v18H2z" fill="#c8d0dc" stroke="#eee" /> },
  { name: "Volume", art: <><path d="M2 9h4l6-6v18l-6-6H2z" fill="#eee" stroke="none" /><path d="M15 7q4 5 0 10M19 4q6 8 0 16" stroke="#eee" /></> },
  { name: "Blocked", art: <><circle cx="11" cy="10" r="9" fill="#2f9bd6" stroke="#dff" /><circle cx="17" cy="17" r="6" fill="#e31c35" stroke="none" /></> },
];

function Taskbar() {
  return (
    <footer className="flex h-[22px] shrink-0 items-center gap-px bg-linear-to-r from-[#a2b9d9] via-[#9eb7d9] via-58% to-[#8191aa] to-62% font-['Open_Sans','Noto_Sans',sans-serif]">
      <button aria-label="Start" className="flex h-full w-[32px] items-center justify-center bg-[#7f92b2] pr-[3px]">
        <svg viewBox="0 0 24 24" className={big}>
          <circle cx="12" cy="12" r="11.500" fill="#275b8c" stroke="#6e9bc5" />
          <path d="M5 7q3-2 6-1v6q-3-1-7 0z" fill="#e5642c" />
          <path d="M12 6q3 1 7-1l-1 7q-3 1-6 0z" fill="#8cbf3f" />
          <path d="M4 13q4-1 7 0v6q-3-2-6-1z" fill="#4eb1e9" />
          <path d="M12 13q3 1 6 0l-1 6q-3 1-5 0z" fill="#f6cb3d" />
        </svg>
      </button>
      {apps.map((a) => (
        <button key={a.name} aria-label={a.name} className={`flex h-full w-[32px] items-center justify-center rounded-xs ${a.on ? (a.name === "Illustrator" ? "border border-[#dce7f5] bg-[#d6e2f2]" : "border border-[#c9d8ec] bg-[#b5c8e2]") : ""}`}>
          {a.art}
        </button>
      ))}
      <div className="ml-auto flex items-center gap-[5px]">
        {tray.map((t) => (
          <span key={t.name} role="img" aria-label={t.name}><Glyph>{t.art}</Glyph></span>
        ))}
      </div>
      <div className="flex w-[43px] flex-col items-center text-[7px] leading-[10px] text-white"><span>10:22 PM</span><span>4/21/2019</span></div>
      <button aria-label="Show desktop" className="h-full w-[5px] border-l border-[#9ca9bc] bg-[#62718a]" />
    </footer>
  );
}

export default function App() {
  return (
    <div className="flex h-screen flex-col overflow-hidden bg-[#535353] font-[Roboto,'Noto_Sans',sans-serif] text-[5px] leading-[7px] text-[#e4e4e4]">
      <MenuBar />
      <ControlBar />
      <div className="flex min-h-0 flex-1">
        <ToolBox />
        <div className="flex min-w-0 flex-1 flex-col">
          <div role="tablist" className="flex h-[14px] shrink-0 items-stretch border-b border-[#3d3d3d] bg-[#434343] font-['Open_Sans','Noto_Sans',sans-serif]">
            <div className="flex w-[143px] items-center justify-between bg-[#535353] pl-[4px] pr-[2px]">
              <button role="tab" aria-selected="true" className="whitespace-nowrap font-semibold">A2-jami-odell-7mm.ai* @ 100% (RGB/GPU Preview)</button>
              <button aria-label="Close tab"><X className="size-[5px]" strokeWidth={5} /></button>
            </div>
            <div className="flex w-[158px] items-center justify-between pl-[5px] pr-[3px] text-[#a2a2a2]">
              <button role="tab" aria-selected="false" className="whitespace-nowrap">A2-jami-odell-3mm-test-fit.ai @ 50% (RGB/GPU Preview)</button>
              <button aria-label="Close tab"><X className="size-[5px] text-[#dddddd]" strokeWidth={5} /></button>
            </div>
          </div>
          <div className="relative flex min-h-0 flex-1">
            <Canvas />
            <IconStrip />
            <Dock />
          </div>
          <StatusBar />
        </div>
      </div>
      <Taskbar />
    </div>
  );
}
